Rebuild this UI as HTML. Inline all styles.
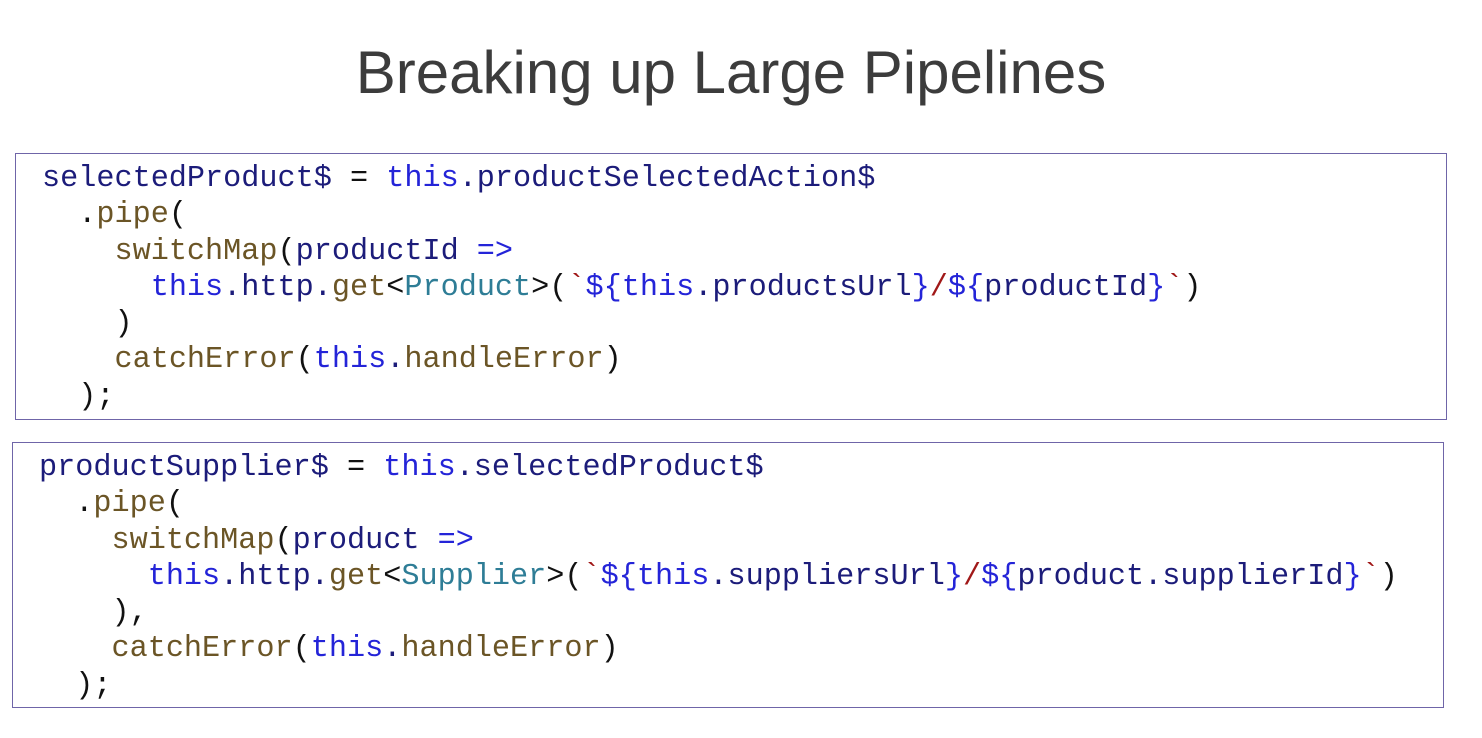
<!DOCTYPE html>
<html><head><meta charset="utf-8"><style>
body{margin:0;width:1482px;height:738px;background:#fff;position:relative;overflow:hidden}
.t{position:absolute;left:0;width:1462px;text-align:center;top:38px;font:60px "Liberation Sans",sans-serif;color:#3c3c3c}
.box{position:absolute;border:1.5px solid #6f65a8;box-sizing:border-box}
pre{position:absolute;margin:0;font:30.2px/36.3px "Liberation Mono",monospace;color:#1c1c7a}
.k{color:#2424d8}.m{color:#6b5526}.ty{color:#2e7d96}.r{color:#a01818}.p{color:#111}
</style></head><body>
<div class="t">Breaking up Large Pipelines</div>
<div class="box" style="left:15px;top:153px;width:1432px;height:267px"></div>
<pre style="left:42px;top:161px">selectedProduct$ <span class="p">=</span> <span class="k">this</span>.productSelectedAction$
  <span class="p">.</span><span class="m">pipe</span><span class="p">(</span>
    <span class="m">switchMap</span><span class="p">(</span>productId <span class="k">=&gt;</span>
      <span class="k">this</span>.http.<span class="m">get</span><span class="p">&lt;</span><span class="ty">Product</span><span class="p">&gt;(</span><span class="r">`</span><span class="k">${this</span>.productsUrl<span class="k">}</span><span class="r">/</span><span class="k">${</span>productId<span class="k">}</span><span class="r">`</span><span class="p">)</span>
    <span class="p">)</span>
    <span class="m">catchError</span><span class="p">(</span><span class="k">this</span>.<span class="m">handleError</span><span class="p">)</span>
  <span class="p">);</span></pre>
<div class="box" style="left:12px;top:442px;width:1432px;height:266px"></div>
<pre style="left:39px;top:450px">productSupplier$ <span class="p">=</span> <span class="k">this</span>.selectedProduct$
  <span class="p">.</span><span class="m">pipe</span><span class="p">(</span>
    <span class="m">switchMap</span><span class="p">(</span>product <span class="k">=&gt;</span>
      <span class="k">this</span>.http.<span class="m">get</span><span class="p">&lt;</span><span class="ty">Supplier</span><span class="p">&gt;(</span><span class="r">`</span><span class="k">${this</span>.suppliersUrl<span class="k">}</span><span class="r">/</span><span class="k">${</span>product.supplierId<span class="k">}</span><span class="r">`</span><span class="p">)</span>
    <span class="p">),</span>
    <span class="m">catchError</span><span class="p">(</span><span class="k">this</span>.<span class="m">handleError</span><span class="p">)</span>
  <span class="p">);</span></pre>
</body></html>
